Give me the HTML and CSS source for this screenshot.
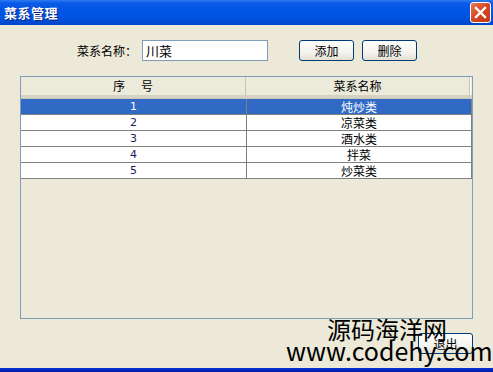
FILE: index.html
```html
<!DOCTYPE html>
<html>
<head>
<meta charset="utf-8">
<link rel="stylesheet" href="styles.css">
</head>
<body>
<div class="window">
  <div class="titlebar">
    <span class="title">菜系管理</span>
    <span class="close"><svg width="13" height="13" viewBox="0 0 13 13"><path d="M2 2 L11 11 M11 2 L2 11" stroke="#fff" stroke-width="2.4" stroke-linecap="square"/></svg></span>
  </div>
  <div class="content">
    <div class="formrow">
      <span class="label">菜系名称：</span>
      <div class="input">川菜</div>
      <button class="btn first">添加</button>
      <button class="btn">删除</button>
    </div>
    <div class="table">
      <div class="thead">
        <div class="th c1">序&nbsp;&nbsp;&nbsp;&nbsp;&nbsp;&nbsp;号</div>
        <div class="th c2">菜系名称</div>
      </div>
      <div class="tr sel"><div class="td c1 num">1</div><div class="td c2">炖炒类</div></div>
      <div class="tr"><div class="td c1 num">2</div><div class="td c2">凉菜类</div></div>
      <div class="tr"><div class="td c1 num">3</div><div class="td c2">酒水类</div></div>
      <div class="tr"><div class="td c1 num">4</div><div class="td c2">拌菜</div></div>
      <div class="tr"><div class="td c1 num">5</div><div class="td c2">炒菜类</div></div>
    </div>
    <div class="footer">
      <button class="btn exit">退出</button>
    </div>
  </div>
  <div class="bottomframe"></div>
  <div class="watermark">
    <div class="wm1">源码海洋网</div>
    <div class="wm2">www.codehy.com</div>
  </div>
</div>
</body>
</html>
```
FILE: styles.css
```css
html, body {
  margin: 0;
  padding: 0;
}
body {
  width: 493px;
  height: 372px;
  overflow: hidden;
  background: #ece9d8;
  font-family: "Noto Sans CJK SC", "Noto Sans", sans-serif;
  font-size: 12px;
  color: #000;
}
.window {
  position: relative;
  width: 493px;
  height: 372px;
  display: flex;
  flex-direction: column;
}
.titlebar {
  height: 25px;
  flex: none;
  background: linear-gradient(to bottom, #2f7bf4 0px, #0a5ae6 3px, #0055e5 12px, #0050dc 20px, #0045c8 25px);
  display: flex;
  align-items: center;
  justify-content: space-between;
  padding: 0 2px 0 4px;
  box-sizing: border-box;
}
.title {
  color: #fff;
  font-weight: bold;
  font-size: 13px;
  letter-spacing: 0.5px;
  text-shadow: 1px 1px 0 #0a1f7a;
  line-height: 25px;
}
.close {
  width: 19px;
  height: 19px;
  border: 1px solid #fff;
  border-radius: 3px;
  background: linear-gradient(135deg, #e8795a 0%, #d6451f 50%, #c13a16 100%);
  display: flex;
  align-items: center;
  justify-content: center;
  margin-top: 0px;
}
.content {
  flex: 1;
  display: flex;
  flex-direction: column;
  padding: 15px 20px 0 20px;
}
.formrow {
  display: flex;
  align-items: center;
  height: 21px;
  padding-left: 57px;
}
.label {
  width: 65px;
  font-size: 12px;
}
.input {
  width: 124px;
  height: 19px;
  border: 1px solid #7f9db9;
  background: #fff;
  font-size: 13px;
  line-height: 19px;
  padding-left: 3px;
  box-sizing: content-box;
  width: 121px;
}
.btn {
  width: 55px;
  height: 21px;
  border: 1px solid #003c74;
  border-radius: 3px;
  background: linear-gradient(to bottom, #fefefe 0%, #f4f3ee 60%, #e3e1d5 100%);
  font-family: "Noto Sans CJK SC", sans-serif;
  font-size: 12px;
  padding: 0;
  margin-left: 8px;
  color: #000;
  box-sizing: border-box;
}
.btn.first {
  margin-left: 31px;
}
.table {
  margin-top: 15px;
  height: 243px;
  border: 1px solid #7f9db9;
  box-sizing: border-box;
  background: #ece9d8;
  display: flex;
  flex-direction: column;
}
.thead {
  display: flex;
  height: 21px;
  box-sizing: border-box;
  border-bottom: 3px solid #d6d2c2;
  box-shadow: 0 1px 0 #cbc7b8;
  background: #ebeadb;
}
.th {
  text-align: center;
  line-height: 18px;
  font-size: 12px;
  box-sizing: border-box;
}
.th.c1 {
  width: 225px;
  border-right: 1px solid #c7c5b2;
}
.th.c2 {
  width: 224px;
  border-right: 1px solid #c7c5b2;
  box-shadow: 1px 0 0 #fff;
}
.tr {
  display: flex;
  height: 16px;
  box-sizing: border-box;
  border-bottom: 1px solid #808080;
  background: #fff;
  width: 451px;
}
.tr:nth-child(2) {
  margin-top: 1px;
}
.td {
  text-align: center;
  line-height: 15px;
  font-size: 12px;
  box-sizing: border-box;
  border-right: 1px solid #808080;
}
.td.c1 {
  width: 226px;
}
.td.c2 {
  width: 225px;
}
.num {
  font-family: "DejaVu Sans", sans-serif;
  font-size: 11px;
  color: #1a1a5a;
}
.tr.sel {
  background: #316ac5;
  color: #fff;
}
.tr.sel .num {
  color: #fff;
}
.footer {
  display: flex;
  justify-content: flex-end;
  margin-top: 14px;
}
.btn.exit {
  margin-left: 0;
}
.bottomframe {
  height: 4px;
  flex: none;
  background: linear-gradient(to bottom, #0831d9, #001ea0);
}
.watermark {
  position: absolute;
  left: 286px;
  top: 315px;
  color: #000;
  pointer-events: none;
}
.wm1 {
  font-family: "Noto Sans CJK SC", sans-serif;
  font-size: 24px;
  line-height: 28px;
  margin-left: 41px;
}
.wm2 {
  font-family: "Noto Sans CJK SC", "Noto Sans", sans-serif;
  font-size: 25px;
  line-height: 26px;
  margin-top: -6px;
}
```
